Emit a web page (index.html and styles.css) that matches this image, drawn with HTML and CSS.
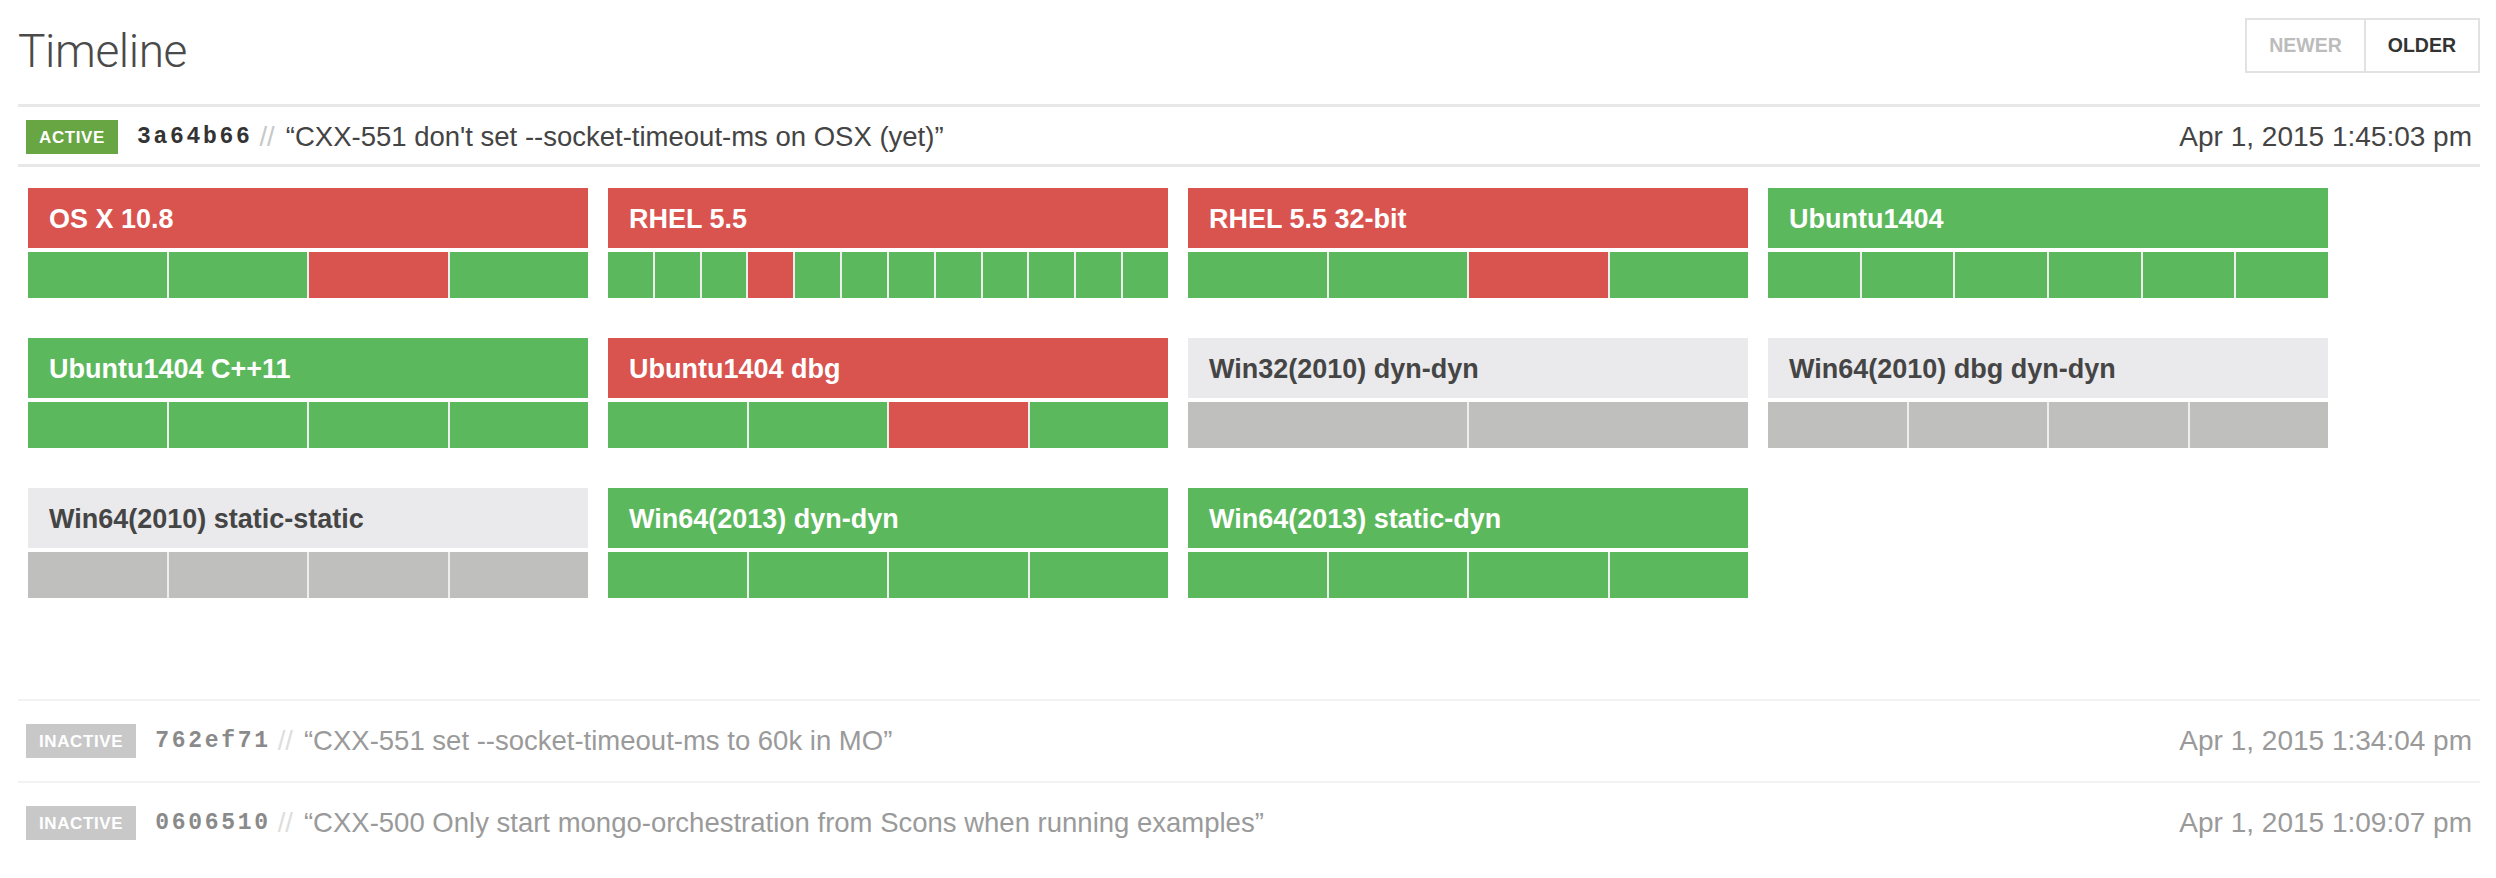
FILE: index.html
```html
<!DOCTYPE html>
<html>
<head>
<meta charset="utf-8">
<title>Timeline</title>
<link rel="stylesheet" href="styles.css">
</head>
<body>
<div class="page">
  <header class="top">
    <h1 class="title">Timeline</h1>
    <div class="pager">
      <span class="pager-btn disabled">NEWER</span>
      <span class="pager-btn">OLDER</span>
    </div>
  </header>

  <div class="commit active">
    <span class="badge">ACTIVE</span>
    <span class="hash">3a64b66</span>
    <span class="sep">//</span>
    <span class="msg">“CXX-551 don't set --socket-timeout-ms on OSX (yet)”</span>
    <span class="date">Apr 1, 2015 1:45:03 pm</span>
  </div>

  <div class="builds">
    <div class="card fail">
      <div class="card-head">OS X 10.8</div>
      <div class="segs"><i class="ok"></i><i class="ok"></i><i class="bad"></i><i class="ok"></i></div>
    </div>
    <div class="card fail">
      <div class="card-head">RHEL 5.5</div>
      <div class="segs"><i class="ok"></i><i class="ok"></i><i class="ok"></i><i class="bad"></i><i class="ok"></i><i class="ok"></i><i class="ok"></i><i class="ok"></i><i class="ok"></i><i class="ok"></i><i class="ok"></i><i class="ok"></i></div>
    </div>
    <div class="card fail">
      <div class="card-head">RHEL 5.5 32-bit</div>
      <div class="segs"><i class="ok"></i><i class="ok"></i><i class="bad"></i><i class="ok"></i></div>
    </div>
    <div class="card pass">
      <div class="card-head">Ubuntu1404</div>
      <div class="segs"><i class="ok"></i><i class="ok"></i><i class="ok"></i><i class="ok"></i><i class="ok"></i><i class="ok"></i></div>
    </div>

    <div class="card pass">
      <div class="card-head">Ubuntu1404 C++11</div>
      <div class="segs"><i class="ok"></i><i class="ok"></i><i class="ok"></i><i class="ok"></i></div>
    </div>
    <div class="card fail">
      <div class="card-head">Ubuntu1404 dbg</div>
      <div class="segs"><i class="ok"></i><i class="ok"></i><i class="bad"></i><i class="ok"></i></div>
    </div>
    <div class="card none">
      <div class="card-head">Win32(2010) dyn-dyn</div>
      <div class="segs"><i class="off"></i><i class="off"></i></div>
    </div>
    <div class="card none">
      <div class="card-head">Win64(2010) dbg dyn-dyn</div>
      <div class="segs"><i class="off"></i><i class="off"></i><i class="off"></i><i class="off"></i></div>
    </div>

    <div class="card none">
      <div class="card-head">Win64(2010) static-static</div>
      <div class="segs"><i class="off"></i><i class="off"></i><i class="off"></i><i class="off"></i></div>
    </div>
    <div class="card pass">
      <div class="card-head">Win64(2013) dyn-dyn</div>
      <div class="segs"><i class="ok"></i><i class="ok"></i><i class="ok"></i><i class="ok"></i></div>
    </div>
    <div class="card pass">
      <div class="card-head">Win64(2013) static-dyn</div>
      <div class="segs"><i class="ok"></i><i class="ok"></i><i class="ok"></i><i class="ok"></i></div>
    </div>
  </div>

  <div class="history">
    <div class="commit inactive">
      <span class="badge">INACTIVE</span>
      <span class="hash">762ef71</span>
      <span class="sep">//</span>
      <span class="msg">“CXX-551 set --socket-timeout-ms to 60k in MO”</span>
      <span class="date">Apr 1, 2015 1:34:04 pm</span>
    </div>
    <div class="commit inactive">
      <span class="badge">INACTIVE</span>
      <span class="hash">0606510</span>
      <span class="sep">//</span>
      <span class="msg">“CXX-500 Only start mongo-orchestration from Scons when running examples”</span>
      <span class="date">Apr 1, 2015 1:09:07 pm</span>
    </div>
  </div>
</div>
</body>
</html>
```

FILE: styles.css
```css
html, body {
  margin: 0;
  padding: 0;
  background: #ffffff;
}

body {
  font-family: "Liberation Sans", Arial, sans-serif;
  color: #444444;
}

.page {
  padding: 0 16px 0 18px;
}

.top {
  display: flex;
  justify-content: space-between;
  align-items: flex-start;
  box-sizing: border-box;
  height: 104px;
  padding-top: 18px;
}

.title {
  margin: 10px 0 0 0;
  font-family: "Roboto", "Liberation Sans", sans-serif;
  font-weight: 300;
  font-size: 46px;
  line-height: 46px;
  color: #4a4a4a;
  letter-spacing: -0.4px;
}

.pager {
  display: flex;
  border: 2px solid #e2e2e2;
}

.pager-btn {
  display: block;
  font-size: 19.5px;
  font-weight: bold;
  line-height: 51px;
  padding: 0 22px;
  color: #333333;
}

.pager-btn + .pager-btn {
  border-left: 2px solid #e2e2e2;
}

.pager-btn.disabled {
  color: #bcbcbc;
}

.commit {
  display: flex;
  align-items: center;
  padding: 0 8px;
  white-space: nowrap;
}

.commit.active {
  border-top: 3px solid #e8e8e8;
  border-bottom: 3px solid #e8e8e8;
  padding-top: 13px;
  padding-bottom: 10px;
}

.badge {
  display: block;
  height: 34px;
  line-height: 35px;
  padding: 0 13px;
  font-size: 17px;
  font-weight: bold;
  letter-spacing: 0.6px;
  color: #ffffff;
  background: #68a543;
}

.hash {
  margin-left: 19px;
  font-family: "Liberation Mono", "Courier New", monospace;
  font-weight: bold;
  font-size: 23px;
  letter-spacing: 2.7px;
  color: #333333;
}

.sep {
  margin-left: 7px;
  font-size: 27.5px;
  color: #c8c8c8;
}

.msg {
  margin-left: 11px;
  font-size: 27.5px;
  color: #444444;
}

.date {
  margin-left: auto;
  font-size: 28px;
  color: #444444;
}

.builds {
  display: grid;
  grid-template-columns: repeat(4, 560px);
  column-gap: 20px;
  row-gap: 40px;
  padding: 21px 0 0 10px;
}

.card-head {
  box-sizing: border-box;
  height: 60px;
  line-height: 60px;
  padding: 1px 0 0 21px;
  font-size: 27px;
  font-weight: bold;
  color: #ffffff;
}

.card.fail .card-head {
  background: #d9534f;
}

.card.pass .card-head {
  background: #5cb85c;
}

.card.none .card-head {
  background: #eaeaec;
  color: #454545;
}

.segs {
  display: flex;
  gap: 2px;
  height: 46px;
  margin-top: 4px;
  background: #eeeeee;
}

.segs i {
  flex: 1;
  display: block;
}

.segs i.ok {
  background: #5cb85c;
}

.segs i.bad {
  background: #d9534f;
}

.segs i.off {
  background: #bfbfbd;
}

.history {
  margin-top: 101px;
}

.commit.inactive {
  border-top: 2px solid #f2f2f2;
  padding-top: 23px;
  padding-bottom: 23px;
}

.commit.inactive .badge {
  background: #c8c8c8;
}

.commit.inactive .hash {
  color: #8a8a8a;
}

.commit.inactive .sep {
  color: #dddddd;
}

.commit.inactive .msg,
.commit.inactive .date {
  color: #9a9a9a;
}
```
